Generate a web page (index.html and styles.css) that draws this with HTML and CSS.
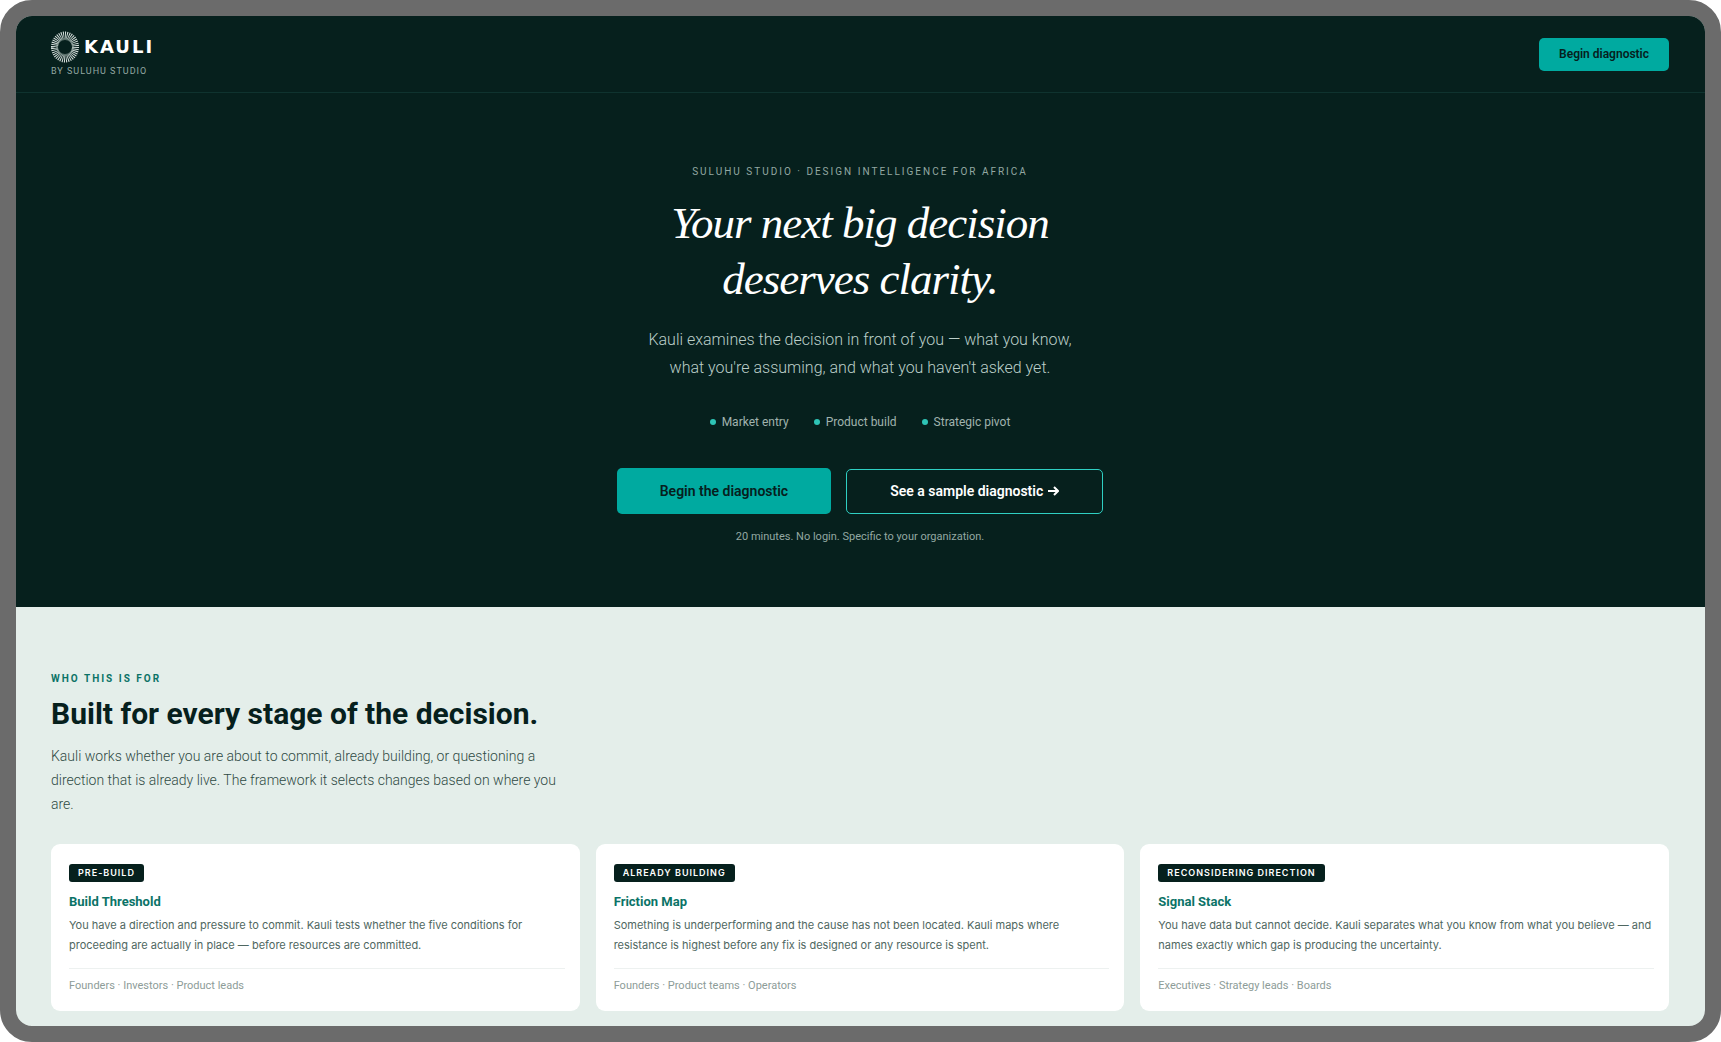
FILE: index.html
```html
<!DOCTYPE html>
<html lang="en">
<head>
<meta charset="utf-8">
<meta name="viewport" content="width=device-width, initial-scale=1">
<title>Kauli by Suluhu Studio</title>
<link rel="stylesheet" href="styles.css">
</head>
<body>
<div class="frame">
  <header class="topbar">
    <a class="brand" href="#">
      <span class="brand-row">
        <svg class="brand-mark" viewBox="0 0 28 32" aria-hidden="true">
          <ellipse class="rays" cx="14" cy="16" rx="10.5" ry="12" pathLength="80"/>
          <circle class="hub" cx="14" cy="16" r="8"/>
        </svg>
        <span class="brand-name">KAULI</span>
      </span>
      <span class="brand-by">BY SULUHU STUDIO</span>
    </a>
    <button class="btn btn-small" type="button">Begin diagnostic</button>
  </header>

  <main>
    <section class="hero">
      <p class="hero-eyebrow">SULUHU STUDIO · DESIGN INTELLIGENCE FOR AFRICA</p>
      <h1>Your next big decision<br>deserves clarity.</h1>
      <p class="lede">Kauli examines the decision in front of you — what you know,<br>what you're assuming, and what you haven't asked yet.</p>
      <ul class="topics">
        <li>Market entry</li>
        <li>Product build</li>
        <li>Strategic pivot</li>
      </ul>
      <div class="actions">
        <button class="btn btn-primary" type="button">Begin the diagnostic</button>
        <button class="btn btn-outline" type="button">See a sample diagnostic
          <svg class="arrow" viewBox="0 0 12 12" aria-hidden="true"><path d="M1 6h10M7 2l4 4-4 4"/></svg>
        </button>
      </div>
      <p class="note">20 minutes. No login. Specific to your organization.</p>
    </section>

    <section class="audience">
      <p class="eyebrow">WHO THIS IS FOR</p>
      <h2>Built for every stage of the decision.</h2>
      <p class="intro">Kauli works whether you are about to commit, already building, or questioning a direction that is already live. The framework it selects changes based on where you are.</p>
      <div class="cards">
        <article class="card">
          <span class="badge">PRE-BUILD</span>
          <h3>Build Threshold</h3>
          <p class="card-text">You have a direction and pressure to commit. Kauli tests whether the five conditions for proceeding are actually in place — before resources are committed.</p>
          <p class="card-roles">Founders · Investors · Product leads</p>
        </article>
        <article class="card">
          <span class="badge">ALREADY BUILDING</span>
          <h3>Friction Map</h3>
          <p class="card-text">Something is underperforming and the cause has not been located. Kauli maps where resistance is highest before any fix is designed or any resource is spent.</p>
          <p class="card-roles">Founders · Product teams · Operators</p>
        </article>
        <article class="card">
          <span class="badge">RECONSIDERING DIRECTION</span>
          <h3>Signal Stack</h3>
          <p class="card-text">You have data but cannot decide. Kauli separates what you know from what you believe — and names exactly which gap is producing the uncertainty.</p>
          <p class="card-roles">Executives · Strategy leads · Boards</p>
        </article>
      </div>
    </section>
  </main>
</div>
</body>
</html>
```
FILE: styles.css
```css
:root {
  --ink: #06201d;
  --teal: #00aaa0;
  --teal-bright: #2ec4b6;
  --teal-dark: #0b7367;
  --mint: #e4eeea;
  --frame: #6b6b6b;
}

* { box-sizing: border-box; margin: 0; padding: 0; }

body {
  background: #fff;
  font-family: Roboto, "Liberation Sans", sans-serif;
  color: var(--ink);
}

.frame {
  min-height: 100vh;
  border: 16px solid var(--frame);
  border-radius: 32px;
  overflow: hidden;
  background: var(--mint);
}

/* Top bar */
.topbar {
  display: flex;
  justify-content: space-between;
  align-items: center;
  height: 77px;
  padding: 0 36px 0 35px;
  background: var(--ink);
  border-bottom: 1px solid #0f332f;
}

.brand { display: block; padding-top: 1px; color: #fff; text-decoration: none; }
.brand-row { display: flex; align-items: center; gap: 5px; }
.brand-mark { width: 28px; height: 32px; fill: none; }
.rays { stroke: #d5dfdc; stroke-width: 7; stroke-dasharray: 1 1; }
.hub { stroke: #a9bbb6; stroke-width: 2; stroke-opacity: .5; }
.brand-name {
  font: 700 18px/32px "DejaVu Sans", sans-serif;
  letter-spacing: 2px;
}
.brand-by {
  display: block;
  font-size: 9px;
  line-height: 16px;
  letter-spacing: 1px;
  color: #93a8a2;
}

/* Buttons */
.btn {
  font-family: inherit;
  font-weight: 600;
  border: 0;
  border-radius: 5px;
  background: var(--teal);
  color: var(--ink);
  cursor: pointer;
}
.btn-small { padding: 0 20px; font-size: 12px; line-height: 33px; }
.btn-primary { padding: 0 43px; font-size: 14px; line-height: 46px; }
.btn-outline {
  display: flex;
  align-items: center;
  gap: 4px;
  padding: 0 43px;
  font-size: 14px;
  line-height: 43px;
  border: 1px solid #2fd0c3;
  background: transparent;
  color: #fff;
}
.arrow { width: 12px; height: 12px; fill: none; stroke: currentColor; stroke-width: 2; }

/* Hero */
.hero {
  display: flex;
  flex-direction: column;
  align-items: center;
  padding: 71px 36px 62px 35px;
  background: var(--ink);
  text-align: center;
}
.hero-eyebrow { font-size: 10px; line-height: 16px; letter-spacing: 2px; color: #93a8a2; }
h1 {
  margin-top: 15px;
  font: italic 400 45px/56px "Liberation Serif", serif;
  letter-spacing: -1px;
  color: #fff;
}
.lede { margin-top: 19px; font-size: 16px; line-height: 28px; font-weight: 300; color: #bccfc9; }
.topics { display: flex; gap: 25px; margin-top: 30px; list-style: none; }
.topics li {
  display: flex;
  align-items: center;
  gap: 6px;
  font-size: 12px;
  line-height: 20px;
  color: #a0b3ae;
}
.topics li::before {
  content: "";
  width: 6px;
  height: 6px;
  border-radius: 50%;
  background: var(--teal-bright);
}
.actions { display: flex; flex-wrap: wrap; justify-content: center; align-items: center; gap: 15px; margin-top: 36px; }
.note { margin-top: 15px; font-size: 11px; line-height: 16px; color: #93a8a2; }

/* Audience */
.audience { padding: 64px 36px 14px 35px; }
.eyebrow { font-size: 10px; line-height: 16px; font-weight: 700; letter-spacing: 2px; color: var(--teal-dark); }
h2 { margin-top: 7px; font-size: 30px; line-height: 40px; font-weight: 700; }
.intro { max-width: 520px; margin-top: 10px; font-size: 14px; line-height: 24px; font-weight: 300; color: #2f4a44; }
.cards { display: grid; grid-template-columns: repeat(3, 1fr); gap: 16px; margin-top: 28px; }
.card { padding: 20px 15px 17px 18px; border-radius: 9px; background: #fff; }
.badge {
  display: inline-block;
  padding: 0 9px;
  border-radius: 3px;
  background: var(--ink);
  color: #fff;
  font: 600 9px/18px Inter, sans-serif;
  letter-spacing: 1px;
  vertical-align: top;
}
h3 { margin-top: 10px; font-size: 13px; line-height: 18px; font-weight: 700; color: var(--teal-dark); }
.card-text { margin-top: 4px; font: 400 11px/20px Inter, sans-serif; color: #4f6761; }
.card-roles {
  margin-top: 13px;
  padding-top: 9px;
  border-top: 1px solid #edf1f0;
  font-size: 11px;
  line-height: 16px;
  color: #8d9c98;
}

@media (max-width: 900px) {
  .cards { grid-template-columns: 1fr; }
}
```
